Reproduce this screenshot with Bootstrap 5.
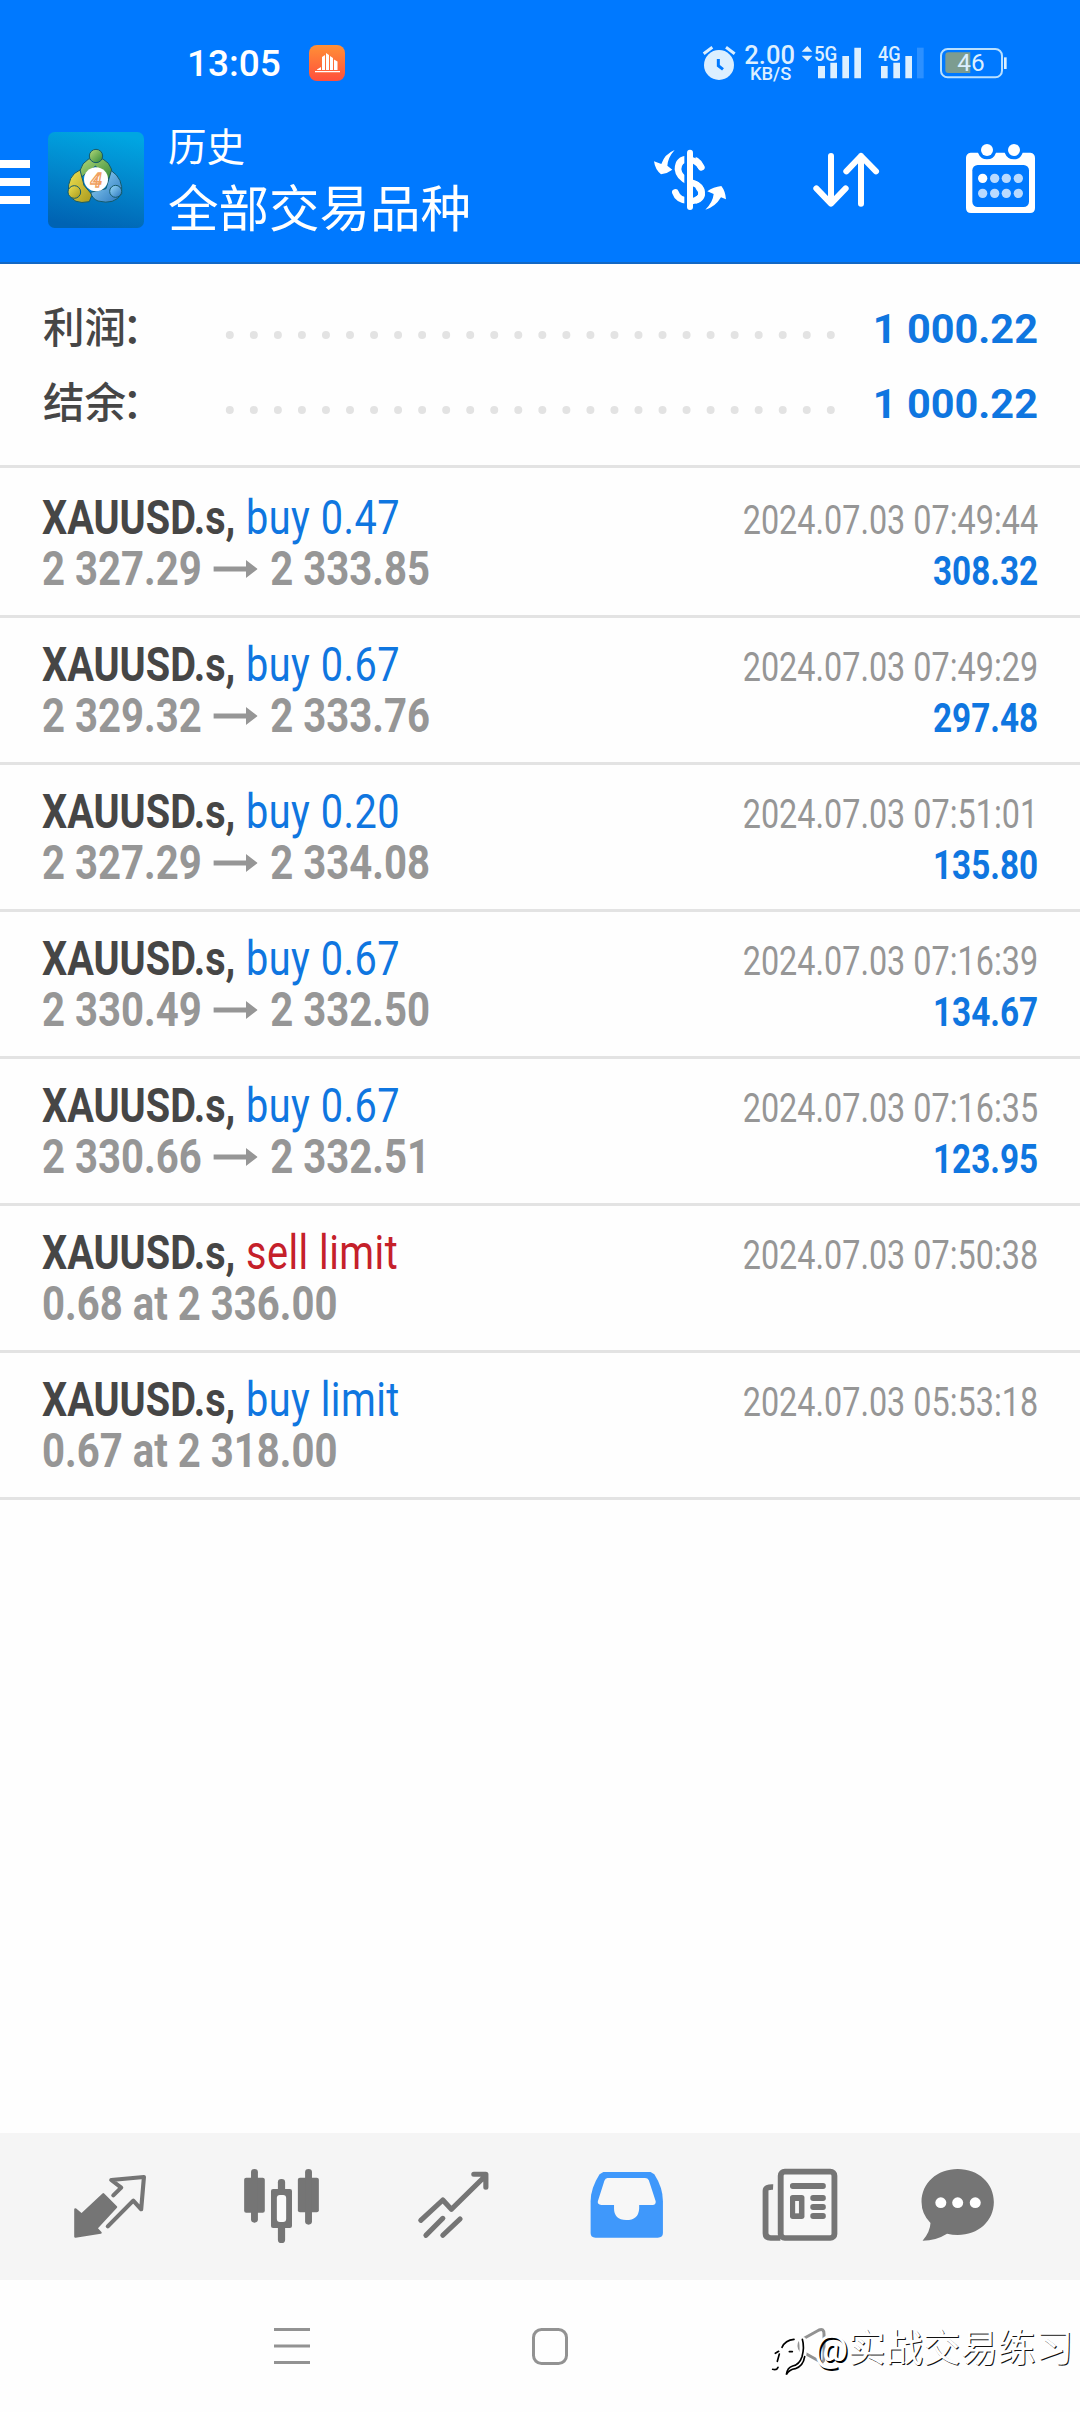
<!DOCTYPE html>
<html lang="zh-CN">
<head>
<meta charset="utf-8">
<meta name="viewport" content="width=device-width, initial-scale=1">
<title>历史</title>
<link href="https://cdn.jsdelivr.net/npm/bootstrap@5.3.0/dist/css/bootstrap.min.css" rel="stylesheet">
<style>
body{width:1080px;height:2412px;overflow:hidden;background:#fefefe;font-family:Roboto,"Noto Sans CJK SC",sans-serif;color:#464646}
svg{display:block;flex:none}
.topbar{height:264px;background:#0079ff;border-bottom:2px solid #1268c4;color:#fff}
.statusbar{height:126px}
.clock{font-size:37px;font-weight:500;line-height:44px;margin-left:187px;width:122px;padding-top:42px}
.appicon{margin-top:45px}
.titles{margin-left:24px;width:402px}
.sub-title{font-size:38.5px;line-height:44px;margin-top:0}
.main-title{font-size:50.5px;line-height:64px;margin-top:8px}
.summary{height:204px;border-bottom:3px solid #e3e3e3;padding:27px 42px 0 43px}
.sumrow{height:75px}
.sumlabel{font-size:41.5px;font-weight:500;line-height:76px;width:182px;flex:none}
.sumlabel span{margin-left:-4px}
.sumval{font-size:41.5px;font-weight:700;line-height:75px;color:#0f76e0}
.deal{height:147px;border-bottom:3px solid #e3e3e3;padding:24px 42px 0 42px}
.deal:first-child{height:150px;padding-top:27px}
.deal-l{margin-top:-3px}
.line-l{font-size:48px;line-height:51px;font-weight:700;white-space:pre;transform:scaleX(.826);transform-origin:left;width:560px}
.line-l.price{transform:scaleX(.836)}
.line-l svg{margin:-6px 3px 0 2px}
.line-r{font-size:40px;line-height:51px;white-space:pre;transform:scaleX(.809);transform-origin:right;text-align:right}
.act{font-weight:400;color:#0f76e0;letter-spacing:.6px;margin-left:1px}
.act.sell{color:#c5202a}
.price,.stamp{color:#969696}
.gain{font-weight:700;color:#0f76e0;transform:scaleX(.832)}
.tabs{height:147px;background:#f5f5f5;padding-left:24px}
.sysnav{height:132px}
.watermark{font-size:37.5px;line-height:50px;color:#fff;text-shadow:1px 1px 0 #111;right:7px;top:43px}
.wm-at{font-weight:500;text-shadow:1.500px 1.500px 0 #000}
</style>
</head>
<body class="d-flex flex-column">
<header class="topbar flex-shrink-0">
  <div class="statusbar d-flex">
    <div class="clock">13:05</div>
    <svg class="appicon" width="36" height="36" viewBox="0 0 36 36"><defs><linearGradient id="og" x1="0" y1="0" x2="0" y2="1"><stop offset="0" stop-color="#ff9036"/><stop offset="1" stop-color="#ff4f3c"/></linearGradient></defs><rect width="36" height="36" rx="8" fill="url(#og)"/><path d="M6 26h25v1.200H6zM8 24.500l4-2.500v3H8zM13 25V12l3-2v15zM17 25V8l3 2v15zM21 25V11l3 2v12zM25 25V14.500l3.500 2V25z" fill="#fff"/></svg>
    <svg class="ms-auto" width="480" height="126" viewBox="0 0 1440 378" font-family="Roboto, sans-serif" fill="#dcefff">
      <circle cx="357" cy="195" r="45"/><path d="M311 161l26-19M404 161l-26-19" stroke="#dcefff" stroke-width="9"/><path d="M355 177v20l14 11" fill="none" stroke="#0079ff" stroke-width="9"/>
      <text x="433" y="191" font-size="76" font-weight="500" textLength="152" lengthAdjust="spacingAndGlyphs">2.00</text><text x="450" y="240" font-size="54" font-weight="500" textLength="124" lengthAdjust="spacingAndGlyphs">KB/S</text>
      <path d="M622 138l15 17h-32zM622 184l15-17h-32z"/>
      <text x="642" y="184" font-size="62" font-weight="500" textLength="70" lengthAdjust="spacingAndGlyphs">5G</text>
      <path d="M654 198h21v37h-21zM691 188h20v47h-20zM727 168h20v67h-20zM763 143h20v92h-20z"/>
      <text x="834" y="184" font-size="62" font-weight="500" textLength="68" lengthAdjust="spacingAndGlyphs">4G</text>
      <path d="M843 198h20v37h-20zM880 188h20v47h-20zM916 168h20v67h-20z"/><path d="M951 143h20v92h-20z" opacity=".2"/>
      <rect x="1023" y="147" width="183" height="85" rx="20" fill="none" stroke="#b9e0ff" stroke-width="6"/><path d="M1212 172h8v35h-8z"/><path d="M1045 157h66v62h-66q-9 0-9-9v-44q0-9 9-9z" fill="#7c9c90"/>
      <text x="1072" y="214" font-size="70" textLength="82" lengthAdjust="spacingAndGlyphs">46</text>
    </svg>
  </div>
  <div class="d-flex">
    <svg width="48" height="100" viewBox="0 126 48 100" fill="#fff"><path d="M0 160h30v8H0zM0 178h30v8H0zM0 196h30v8H0z"/></svg>
    <svg width="96" height="102" viewBox="0 -18 288 306"><defs><linearGradient id="lg" x1=".6" y1="0" x2=".4" y2="1"><stop offset="0" stop-color="#00a6e2"/><stop offset=".5" stop-color="#0285cb"/><stop offset="1" stop-color="#0063b3"/></linearGradient><linearGradient id="gg" x1="0" y1="0" x2="1" y2="1"><stop offset="0" stop-color="#b8dc7a"/><stop offset="1" stop-color="#2f8637"/></linearGradient><linearGradient id="yg" x1="0" y1="0" x2="1" y2="1"><stop offset="0" stop-color="#f0e252"/><stop offset="1" stop-color="#a8981c"/></linearGradient><linearGradient id="bg" x1="0" y1="0" x2="1" y2="1"><stop offset="0" stop-color="#9adcfa"/><stop offset="1" stop-color="#2874bd"/></linearGradient></defs>
      <rect width="288" height="288" rx="20" fill="url(#lg)"/>
      <g stroke="#145a6b" stroke-width="3"><path d="M94 140Q92 84 143 74Q194 84 193 133L166 146L143 102Z" fill="url(#gg)"/><circle cx="144" cy="72" r="20" fill="url(#gg)"/><path d="M96 114Q58 130 61 182Q75 220 124 209L132 188L108 160Z" fill="url(#yg)"/><circle cx="79" cy="180" r="19" fill="url(#yg)"/><path d="M190 116Q226 140 221 185Q200 220 150 207Q132 200 128 181L174 170Z" fill="url(#bg)"/><circle cx="203" cy="178" r="18" fill="url(#bg)"/></g>
      <circle cx="144" cy="142" r="36" fill="#fff"/><text x="144" y="164" font-family="Roboto,sans-serif" font-style="italic" font-weight="700" font-size="60" text-anchor="middle" fill="#fff" stroke="#f0a060" stroke-width="4">4</text></svg>
    <div class="titles"><div class="sub-title">历史</div><div class="main-title">全部交易品种</div></div>
    <svg class="ms-auto" width="480" height="110" viewBox="0 378 1440 330" fill="#fff" stroke-linecap="round" stroke-linejoin="round">
      <g fill="none" stroke="#fff" stroke-width="20"><path d="M304 502Q292 476 266 476Q234 478 234 508Q236 532 268 546Q305 556 305 584Q302 602 268 603Q234 602 226 577"/></g><path d="M270 458V621" stroke="#0079ff" stroke-width="34" stroke-linecap="butt"/><path d="M275 480Q292 484 303 501M279 549Q305 558 305 578Q304 598 279 603" fill="none" stroke="#fff" stroke-width="19"/><path d="M270 458V621" stroke="#fff" stroke-width="18"/>
      <path d="M224 450Q194 462 184 492L162 484Q165 508 183 523Q203 520 217 509L202 497Q204 472 224 450ZM316 629Q345 622 363 592L378 598Q376 573 364 558Q340 561 322 574L341 582Q339 606 316 629Z"/>
      <path d="M693 468V610M649 565L693 611L737 565M783 611V468M739 514L783 468L828 514" fill="none" stroke="#fff" stroke-width="18"/>
      <path d="M1112 458H1134Q1142 478 1161 478Q1181 478 1188 458H1214Q1222 478 1242 478Q1261 478 1268 458H1291Q1305 460 1305 474V624Q1305 639 1290 639H1113Q1098 639 1098 624V474Q1098 460 1112 458Z"/><circle cx="1161" cy="450" r="18"/><circle cx="1242" cy="450" r="18"/><rect x="1117" y="495" width="170" height="126" rx="16" fill="#0079ff"/>
      <circle cx="1148" cy="535" r="14"/><g fill="#b9daff"><circle cx="1184" cy="535" r="14"/><circle cx="1219" cy="535" r="14"/><circle cx="1255" cy="535" r="14"/><circle cx="1148" cy="580" r="14"/><circle cx="1184" cy="580" r="14"/><circle cx="1219" cy="580" r="14"/><circle cx="1255" cy="580" r="14"/></g>
    </svg>
  </div>
</header>
<section class="summary flex-shrink-0">
  <div class="sumrow d-flex"><div class="sumlabel">利润<span>：</span></div><svg width="612" height="75"><path d="M4.800 44H608" stroke="#e3e3e3" stroke-width="8" stroke-linecap="round" stroke-dasharray="0 24.040"/></svg><div class="sumval ms-auto">1 000.22</div></div>
  <div class="sumrow d-flex"><div class="sumlabel">结余<span>：</span></div><svg width="612" height="75"><path d="M4.800 44H608" stroke="#e3e3e3" stroke-width="8" stroke-linecap="round" stroke-dasharray="0 24.040"/></svg><div class="sumval ms-auto">1 000.22</div></div>
</section>
<main class="flex-grow-1">
  <div class="deal d-flex justify-content-between"><div class="deal-l"><div class="line-l">XAUUSD.s, <span class="act">buy 0.47</span></div><div class="line-l price">2 327.29 <svg class="d-inline-block" width="53" height="20" viewBox="0 0 53 20"><path d="M0 7.500h39V1l14 9-14 9v-6.500H0z" fill="#969696"/></svg> 2 333.85</div></div><div><div class="line-r stamp">2024.07.03 07:49:44</div><div class="line-r gain">308.32</div></div></div>
  <div class="deal d-flex justify-content-between"><div class="deal-l"><div class="line-l">XAUUSD.s, <span class="act">buy 0.67</span></div><div class="line-l price">2 329.32 <svg class="d-inline-block" width="53" height="20" viewBox="0 0 53 20"><path d="M0 7.500h39V1l14 9-14 9v-6.500H0z" fill="#969696"/></svg> 2 333.76</div></div><div><div class="line-r stamp">2024.07.03 07:49:29</div><div class="line-r gain">297.48</div></div></div>
  <div class="deal d-flex justify-content-between"><div class="deal-l"><div class="line-l">XAUUSD.s, <span class="act">buy 0.20</span></div><div class="line-l price">2 327.29 <svg class="d-inline-block" width="53" height="20" viewBox="0 0 53 20"><path d="M0 7.500h39V1l14 9-14 9v-6.500H0z" fill="#969696"/></svg> 2 334.08</div></div><div><div class="line-r stamp">2024.07.03 07:51:01</div><div class="line-r gain">135.80</div></div></div>
  <div class="deal d-flex justify-content-between"><div class="deal-l"><div class="line-l">XAUUSD.s, <span class="act">buy 0.67</span></div><div class="line-l price">2 330.49 <svg class="d-inline-block" width="53" height="20" viewBox="0 0 53 20"><path d="M0 7.500h39V1l14 9-14 9v-6.500H0z" fill="#969696"/></svg> 2 332.50</div></div><div><div class="line-r stamp">2024.07.03 07:16:39</div><div class="line-r gain">134.67</div></div></div>
  <div class="deal d-flex justify-content-between"><div class="deal-l"><div class="line-l">XAUUSD.s, <span class="act">buy 0.67</span></div><div class="line-l price">2 330.66 <svg class="d-inline-block" width="53" height="20" viewBox="0 0 53 20"><path d="M0 7.500h39V1l14 9-14 9v-6.500H0z" fill="#969696"/></svg> 2 332.51</div></div><div><div class="line-r stamp">2024.07.03 07:16:35</div><div class="line-r gain">123.95</div></div></div>
  <div class="deal d-flex justify-content-between"><div class="deal-l"><div class="line-l">XAUUSD.s, <span class="act sell">sell limit</span></div><div class="line-l price">0.68 at 2 336.00</div></div><div><div class="line-r stamp">2024.07.03 07:50:38</div></div></div>
  <div class="deal d-flex justify-content-between"><div class="deal-l"><div class="line-l">XAUUSD.s, <span class="act">buy limit</span></div><div class="line-l price">0.67 at 2 318.00</div></div><div><div class="line-r stamp">2024.07.03 05:53:18</div></div></div>
</main>
<nav class="tabs d-flex flex-shrink-0">
  <svg width="172" height="147" viewBox="69.7 39 499.500 441" preserveAspectRatio="none" stroke-linejoin="round" stroke-linecap="round"><path d="M219 268L237 284L300 223L337 261L280 325L292 338L219 350Z" fill="#757575" stroke="#757575" stroke-width="7"/><path d="M329 226L352 203L323 180L418 171L410 268L387 242L313 319" fill="none" stroke="#757575" stroke-width="12"/></svg>
  <svg width="172" height="147" viewBox="569.2 39 499.500 441" preserveAspectRatio="none" fill="#757575"><rect x="709" y="173" width="60" height="105" rx="6"/><rect x="729" y="147" width="20" height="161" rx="10"/><rect x="865" y="173" width="61" height="104" rx="6"/><rect x="886" y="147" width="20" height="167" rx="10"/><rect x="807" y="177" width="21" height="192" rx="10"/><rect x="787" y="207" width="61" height="117" rx="6"/><rect x="804" y="225" width="27" height="81" rx="9" fill="#fafafa"/></svg>
  <svg width="172" height="147" viewBox="1068.700 39 499.500 441" preserveAspectRatio="none" fill="none" stroke="#757575" stroke-width="15" stroke-linecap="round" stroke-linejoin="round"><path d="M1222 301L1286 240L1311 268L1407 170M1376 163H1411V202M1237 346L1286 295M1286 346L1336 297"/></svg>
  <svg width="172" height="147" viewBox="0 39 499.500 441" preserveAspectRatio="none"><path d="M184 156H321L332 163Q357 203 357 244V339Q357 353 342 353H161Q147 353 147 339V244Q147 205 173 163Z" fill="#3f98fb"/><path d="M196 174H305Q313 174 316 181L336 244Q337 255 327 255H288V266Q286 300 250 300Q215 298 215 266V255H178Q166 254 168 244L187 182Q190 174 196 174Z" fill="#f7f7f7"/></svg>
  <svg width="172" height="147" viewBox="499.500 39 499.500 441" preserveAspectRatio="none" fill="#757575"><path d="M677 201Q655 200 655 212V340Q655 354 670 354H698" fill="none" stroke="#757575" stroke-width="17"/><rect x="699" y="155" width="156" height="199" rx="12" fill="#f8f8f8" stroke="#757575" stroke-width="17"/><rect x="726" y="189" width="104" height="18" rx="8"/><rect x="726" y="225" width="42" height="72" rx="8"/><path d="M741 243h11v37h-11z" fill="#f8f8f8"/><rect x="785" y="225" width="45" height="18" rx="8"/><rect x="785" y="252" width="45" height="18" rx="8"/><rect x="785" y="279" width="45" height="18" rx="8"/></svg>
  <svg width="172" height="147" viewBox="999 39 499.500 441" preserveAspectRatio="none"><path d="M1213 147C1273 147 1318 189 1318 246C1318 303 1273 345 1213 345Q1198 345 1182 341Q1150 362 1111 362Q1133 336 1134 309Q1108 282 1108 246C1108 189 1153 147 1213 147Z" fill="#757575"/><g fill="#fff"><circle cx="1164" cy="248" r="16"/><circle cx="1213" cy="248" r="16"/><circle cx="1264" cy="248" r="16"/></g></svg>
</nav>
<footer class="sysnav position-relative flex-shrink-0">
  <svg width="1080" height="132" viewBox="0 2280 1080 132" fill="none" stroke="#929292" stroke-width="3"><path d="M274 2329.500H310M274 2346H310M274 2362.500H310"/><rect x="533.500" y="2329.500" width="33" height="34" rx="8"/><path d="M801 2340L819 2330Q824 2328 824 2334V2358Q824 2364 819 2361L801 2351Q797 2346 801 2340Z"/>
    <g transform="translate(760 2310) scale(.33333)" stroke-linecap="round"><path d="M48 172Q58 165 64 128Q70 96 96 92M56 128H96M128 92Q136 150 108 164Q88 166 82 186" stroke="#fff" stroke-width="22"/><path d="M38 178Q50 182 54 172M46 130L56 124M52 154L58 132M66 112Q76 90 102 88M88 125H97M127 88Q134 112 126 140Q118 164 98 168Q82 172 79 194Q88 178 106 176Q130 168 134 140" stroke="#000" stroke-width="5"/></g></svg>
  <div class="watermark position-absolute"><span class="wm-at">@</span>实战交易练习</div>
</footer>
<script src="https://cdn.jsdelivr.net/npm/bootstrap@5.3.0/dist/js/bootstrap.bundle.min.js"></script>
</body>
</html>
